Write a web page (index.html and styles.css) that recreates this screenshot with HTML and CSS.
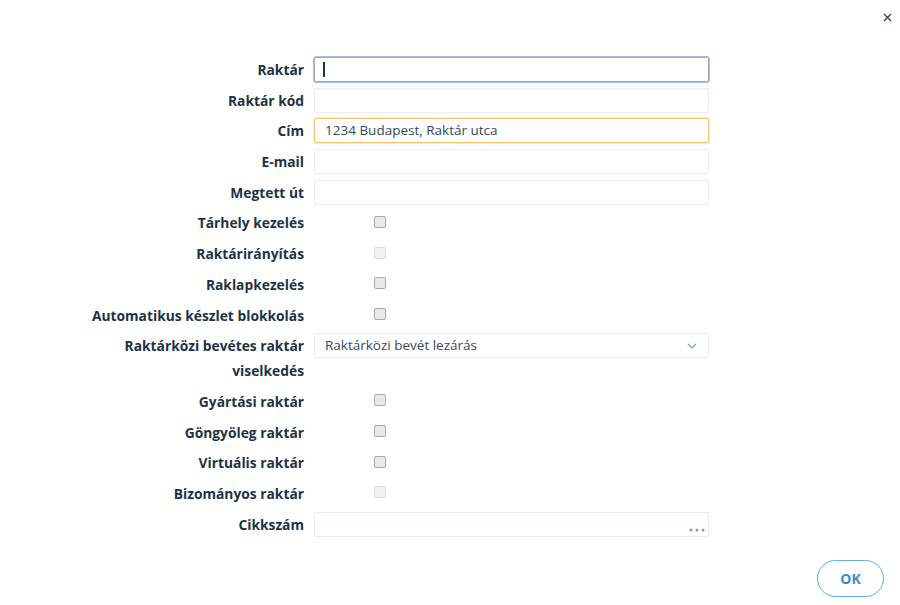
FILE: index.html
```html
<!DOCTYPE html>
<html lang="hu">
<head>
<meta charset="utf-8">
<link rel="stylesheet" href="styles.css">
</head>
<body>
<div class="dialog">
  <div class="header">
    <button class="close" aria-label="Bezárás">
      <svg width="9" height="9" viewBox="0 0 9 9"><path d="M1 1 L8 8 M8 1 L1 8" stroke="#2b4355" stroke-width="1.3" fill="none"/></svg>
    </button>
  </div>
  <form class="form">
    <label class="lbl">Raktár</label>
    <div class="field"><div class="input focus"><span class="caret"></span></div></div>

    <label class="lbl">Raktár kód</label>
    <div class="field"><div class="input"></div></div>

    <label class="lbl">Cím</label>
    <div class="field"><div class="input warn">1234 Budapest, Raktár utca</div></div>

    <label class="lbl">E-mail</label>
    <div class="field"><div class="input"></div></div>

    <label class="lbl">Megtett út</label>
    <div class="field"><div class="input"></div></div>

    <label class="lbl">Tárhely kezelés</label>
    <div class="field"><span class="cb"></span></div>

    <label class="lbl">Raktárirányítás</label>
    <div class="field"><span class="cb disabled"></span></div>

    <label class="lbl">Raklapkezelés</label>
    <div class="field"><span class="cb"></span></div>

    <label class="lbl">Automatikus készlet blokkolás</label>
    <div class="field"><span class="cb"></span></div>

    <label class="lbl wrap">Raktárközi bevétes raktár viselkedés</label>
    <div class="field top"><div class="input select">Raktárközi bevét lezárás
      <svg class="chev" width="10" height="6" viewBox="0 0 10 6"><path d="M1 1 L5 5 L9 1" stroke="#6d9cc6" stroke-width="1.2" fill="none"/></svg></div></div>

    <label class="lbl">Gyártási raktár</label>
    <div class="field"><span class="cb"></span></div>

    <label class="lbl">Göngyöleg raktár</label>
    <div class="field"><span class="cb"></span></div>

    <label class="lbl">Virtuális raktár</label>
    <div class="field"><span class="cb"></span></div>

    <label class="lbl">Bizományos raktár</label>
    <div class="field"><span class="cb disabled"></span></div>

    <label class="lbl">Cikkszám</label>
    <div class="field"><div class="input lookup">
      <svg class="dots" width="16" height="4" viewBox="0 0 16 4"><circle cx="2" cy="2" r="1.5" fill="#8a9ab0"/><circle cx="8" cy="2" r="1.5" fill="#8a9ab0"/><circle cx="14" cy="2" r="1.5" fill="#8a9ab0"/></svg>
    </div></div>
  </form>
  <div class="footer">
    <button class="ok">OK</button>
  </div>
</div>
</body>
</html>
```

FILE: styles.css
```css
html, body {
  margin: 0;
  padding: 0;
  background: #ffffff;
}
body {
  font-family: "Open Sans", "Noto Sans", sans-serif;
  width: 900px;
  height: 605px;
  overflow: hidden;
}
.dialog {
  display: flex;
  flex-direction: column;
}
.header {
  display: flex;
  justify-content: flex-end;
  height: 57px;
  padding-right: 8px;
  box-sizing: border-box;
}
.close {
  border: 0;
  background: transparent;
  padding: 0;
  margin-top: 13px;
  width: 9px;
  height: 10px;
  display: flex;
  cursor: pointer;
}
.form {
  display: grid;
  grid-template-columns: 224px 395px;
  column-gap: 10px;
  row-gap: 5.7px;
  margin: 0 0 0 80px;
}
.lbl {
  font-weight: 700;
  font-size: 13.8px;
  color: #1b3346;
  text-align: right;
  height: 25px;
  line-height: 25px;
  white-space: nowrap;
}
.lbl.wrap {
  white-space: normal;
  height: 50px;
}
.field {
  height: 25px;
  display: flex;
  align-items: center;
}
.field.top {
  align-items: flex-start;
  height: 50px;
}
.input {
  box-sizing: border-box;
  width: 395px;
  height: 25px;
  border: 1px solid #e6edf3;
  border-radius: 2px;
  padding: 0 10px;
  font-size: 13.5px;
  line-height: 23px;
  color: #34495a;
  display: flex;
  align-items: center;
  position: relative;
}
.input.focus {
  border: 1px solid #a9a9a9;
  box-shadow: 0 0 0 1px #a6bfe6;
}
.caret {
  display: block;
  width: 1.5px;
  height: 15px;
  background: #1e3547;
  margin-left: -2px;
}
.input.warn {
  border: 1px solid #f6c56e;
  box-shadow: 0 0 0 0.5px #fbdca0;
}
.input.select {
  justify-content: space-between;
  color: #34495a;
}
.chev {
  margin-right: 1px;
}
.input.lookup {
  justify-content: flex-end;
  align-items: flex-end;
  padding-right: 3px;
}
.dots {
  display: block;
  margin-bottom: 4px;
}
.cb {
  box-sizing: border-box;
  width: 12px;
  height: 12px;
  border: 1px solid #a8a8a8;
  border-radius: 2px;
  background: #e9e9e9;
  margin-left: 60px;
  margin-top: -2px;
}
.cb.disabled {
  border-color: #dadada;
  background: #f2f2f2;
}
.footer {
  display: flex;
  justify-content: flex-end;
  padding: 23.5px 16px 0 0;
}
.ok {
  box-sizing: border-box;
  width: 67px;
  height: 37px;
  border: 1.5px solid #5db0dd;
  border-radius: 19px;
  background: #ffffff;
  color: #3a8fc6;
  font-family: "Open Sans", "Noto Sans", sans-serif;
  font-weight: 700;
  font-size: 14px;
  cursor: pointer;
}
```
